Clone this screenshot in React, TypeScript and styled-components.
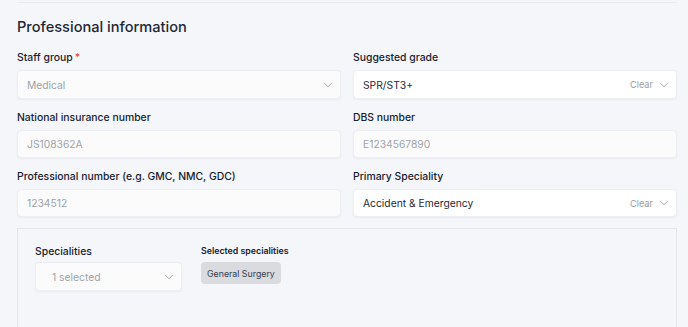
import React from "react";
import styled, { createGlobalStyle } from "styled-components";
import { ChevronDown } from "lucide-react";

const Global = createGlobalStyle`
  html, body { margin: 0; padding: 0; background: #f5f6fa; }
  body { font-family: Inter, "Noto Sans", sans-serif; color: #1f2b38; }
  * { box-sizing: border-box; }
`;

const Page = styled.div`
  width: 688px;
  height: 327px;
  overflow: hidden;
  padding: 0 11px 0 17px;
  background: #f5f6fa;
`;

const Divider = styled.div`
  height: 1px;
  margin-top: 2px;
  background: #e9ebef;
`;

const Title = styled.h2`
  margin: 12px 0 0;
  font-size: 14.6px;
  line-height: 24px;
  font-weight: 500;
  color: #1c2836;
`;

const Grid = styled.div`
  margin-top: 11px;
  display: grid;
  grid-template-columns: 324px 324px;
  column-gap: 12px;
  row-gap: 11px;
`;

const Field = styled.div`
  display: flex;
  flex-direction: column;
  gap: 5px;
`;

const Label = styled.label<{ $small?: boolean }>`
  font-size: ${(p) => (p.$small ? "8.8px" : "10.4px")};
  line-height: ${(p) => (p.$small ? "12px" : "15px")};
  font-weight: ${(p) => (p.$small ? 600 : 500)};
  color: #18222f;
  white-space: nowrap;
`;

const Req = styled.span`
  color: #e5484d;
  margin-left: 2px;
`;

const Control = styled.div<{ $muted?: boolean; $h?: number }>`
  height: ${(p) => p.$h ?? 29}px;
  display: flex;
  align-items: center;
  padding: 0 5px 0 9px;
  background: ${(p) => (p.$muted ? "#fbfbfc" : "#ffffff")};
  border: 1px solid #eceef1;
  border-radius: 4px;
  box-shadow: 0 1px 2px rgba(20, 30, 50, 0.05);
  font-size: 10.3px;
  color: ${(p) => (p.$muted ? "#9ea3aa" : "#1f2a36")};
`;

const Value = styled.span`
  flex: 1;
  white-space: nowrap;
`;

const Clear = styled.span`
  font-size: 9.2px;
  color: #9a9ea5;
  margin-right: 4px;
`;

const Chevron = styled(ChevronDown)`
  color: #8d939b;
  flex-shrink: 0;
`;

const SubPanel = styled.div`
  margin-top: 11px;
  height: 120px;
  border: 1px solid #e3e6ea;
  border-bottom: none;
  background: #f5f6fa;
  padding: 15px 17px;
  display: flex;
  gap: 19px;
`;

const SpecField = styled.div`
  width: 147px;
  display: flex;
  flex-direction: column;
  gap: 3px;
`;

const SelectedCol = styled.div`
  display: flex;
  flex-direction: column;
  gap: 5px;
  padding-top: 1px;
`;

const Chip = styled.span`
  align-self: flex-start;
  height: 22px;
  padding: 0 6px;
  display: inline-flex;
  align-items: center;
  background: #dadbde;
  border-radius: 4px;
  font-size: 8.8px;
  color: #36404c;
`;

const SpecControl = styled(Control)`
  padding: 0 5px 0 16px;
`;

export default function App() {
  return (
    <>
      <Global />
      <Page>
        <Divider />
        <Title>Professional information</Title>
        <Grid>
          <Field>
            <Label>
              Staff group<Req>*</Req>
            </Label>
            <Control $muted>
              <Value>Medical</Value>
              <Chevron size={14} strokeWidth={1.4} />
            </Control>
          </Field>
          <Field>
            <Label>Suggested grade</Label>
            <Control>
              <Value>SPR/ST3+</Value>
              <Clear>Clear</Clear>
              <Chevron size={14} strokeWidth={1.4} />
            </Control>
          </Field>
          <Field>
            <Label>National insurance number</Label>
            <Control $muted $h={28}>
              <Value>JS108362A</Value>
            </Control>
          </Field>
          <Field>
            <Label>DBS number</Label>
            <Control $muted $h={28}>
              <Value>E1234567890</Value>
            </Control>
          </Field>
          <Field>
            <Label>Professional number (e.g. GMC, NMC, GDC)</Label>
            <Control $muted $h={28}>
              <Value>1234512</Value>
            </Control>
          </Field>
          <Field>
            <Label>Primary Speciality</Label>
            <Control $h={28}>
              <Value>Accident &amp; Emergency</Value>
              <Clear>Clear</Clear>
              <Chevron size={14} strokeWidth={1.4} />
            </Control>
          </Field>
        </Grid>
        <SubPanel>
          <SpecField>
            <Label>Specialities</Label>
            <SpecControl $muted>
              <Value>1 selected</Value>
              <Chevron size={14} strokeWidth={1.4} />
            </SpecControl>
          </SpecField>
          <SelectedCol>
            <Label $small>Selected specialities</Label>
            <Chip>General Surgery</Chip>
          </SelectedCol>
        </SubPanel>
      </Page>
    </>
  );
}
